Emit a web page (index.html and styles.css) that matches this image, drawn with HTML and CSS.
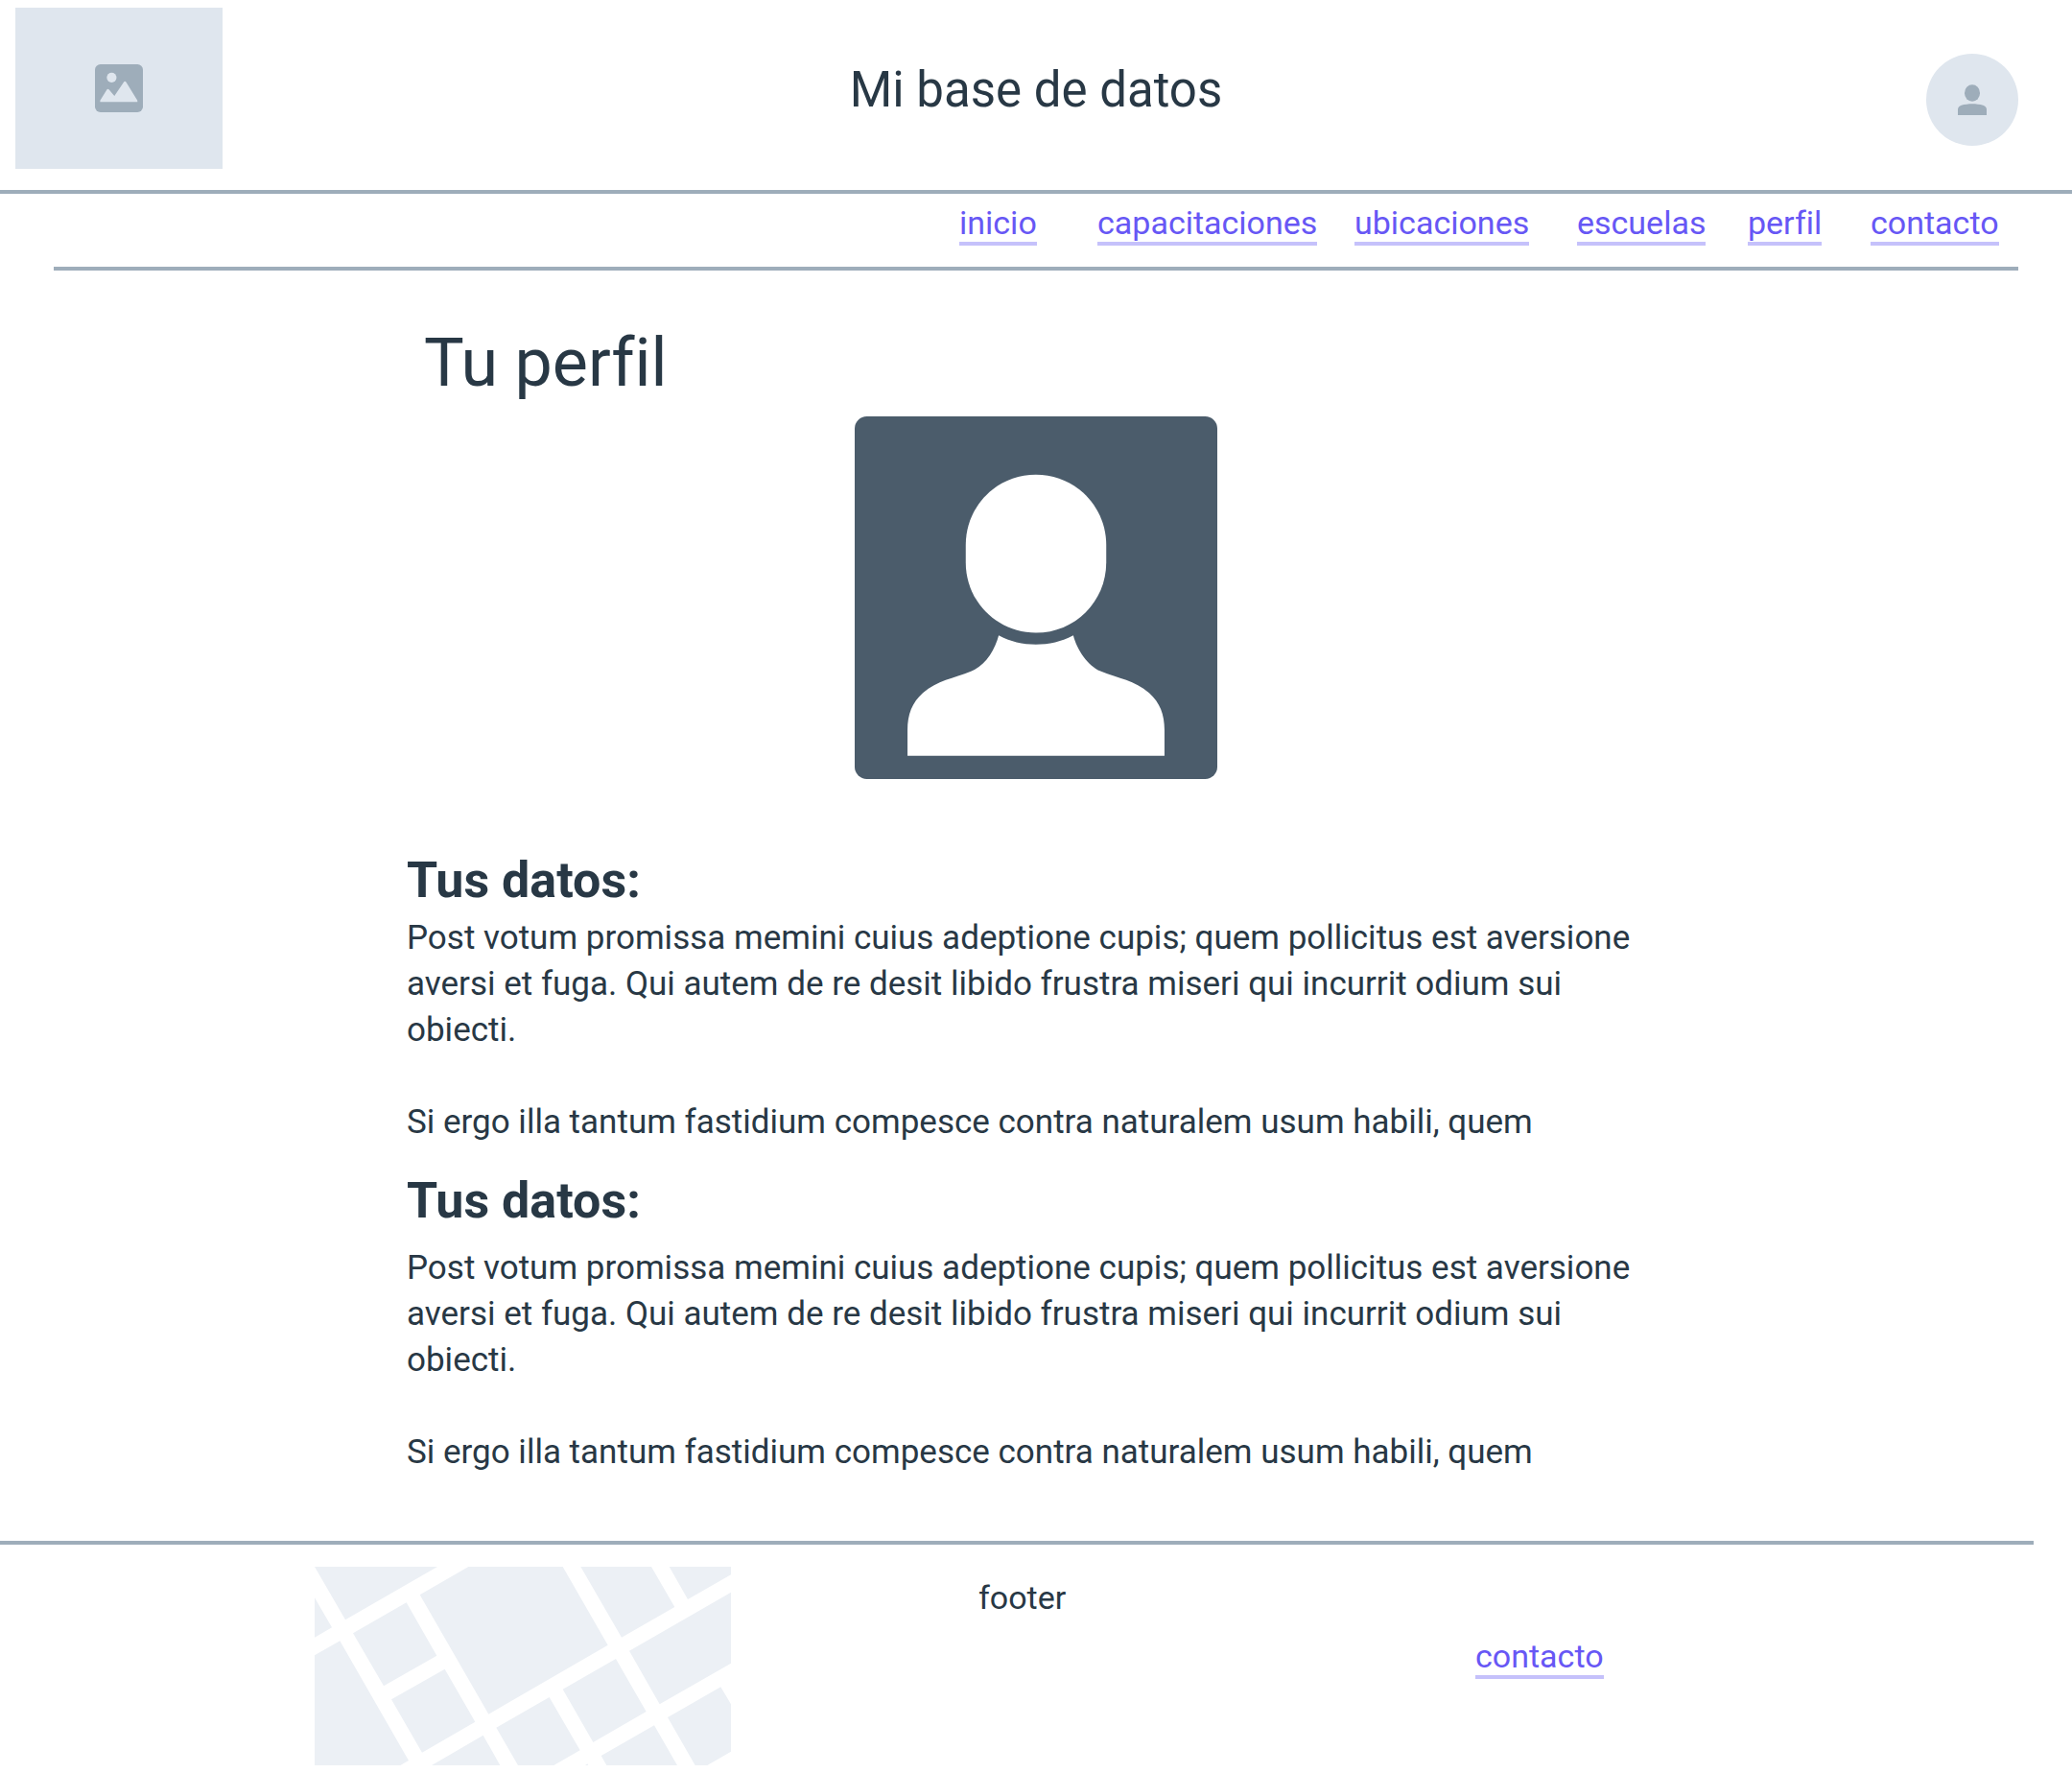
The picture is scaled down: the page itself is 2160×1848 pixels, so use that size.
FILE: index.html
```html
<!DOCTYPE html>
<html lang="es">
<head>
<meta charset="utf-8">
<meta name="viewport" content="width=device-width, initial-scale=1">
<title>Mi base de datos</title>
<link rel="stylesheet" href="styles.css">
</head>
<body>
<header class="header">
  <div class="logo">
    <svg class="logo-icon" viewBox="298 202 148 148" aria-hidden="true">
      <rect class="icon-fill" x="298" y="202" width="148" height="148" rx="17"/>
      <circle class="icon-cut" cx="349.500" cy="243" r="15"/>
      <path class="icon-cut" d="M314 318V314L335 280Q338 276 341 280L358 300L387 257Q390 252 394 257L429 314V318Z"/>
    </svg>
  </div>
  <p class="site-title">Mi base de datos</p>
  <svg class="avatar" viewBox="84 78 288 288" aria-hidden="true">
    <circle class="icon-cut" cx="228" cy="222" r="144"/>
    <rect class="icon-fill" x="204" y="175" width="48" height="52" rx="24" ry="25"/>
    <path class="icon-fill" d="M183 270V252C183 246 187 242 194 239C214 233 242 233 262 239C269 242 273 246 273 252V270Z"/>
  </svg>
</header>
<nav class="nav">
  <ul class="nav-list">
    <li><a class="link" href="#inicio">inicio</a></li>
    <li><a class="link" href="#capacitaciones">capacitaciones</a></li>
    <li><a class="link" href="#ubicaciones">ubicaciones</a></li>
    <li><a class="link" href="#escuelas">escuelas</a></li>
    <li><a class="link" href="#perfil">perfil</a></li>
    <li><a class="link" href="#contacto">contacto</a></li>
  </ul>
</nav>
<main class="main" id="perfil">
  <h1 class="page-title">Tu perfil</h1>
  <svg class="portrait" viewBox="66 72 1133 1133" aria-hidden="true">
    <rect class="portrait-back" x="66" y="72" width="1133" height="1133" rx="38"/>
    <path class="portrait-figure" d="M632 254C754 254 852 352 852 474V528C852 650 754 748 632 748C510 748 413 650 413 528V474C413 352 510 254 632 254Z"/>
    <path class="portrait-figure" d="M516 756C586 794 678 794 749 756C761 802 794 850 834 868C892 892 940 896 986 936C1020 966 1034 1004 1034 1052V1132H231V1052C231 1004 245 966 279 936C325 896 373 892 431 868C474 850 504 802 516 756Z"/>
  </svg>
  <section class="block">
    <h2 class="block-title">Tus datos:</h2>
    <p class="text">Post votum promissa memini cuius adeptione cupis; quem pollicitus est aversione aversi et fuga. Qui autem de re desit libido frustra miseri qui incurrit odium sui obiecti.</p>
    <p class="text">Si ergo illa tantum fastidium compesce contra naturalem usum habili, quem</p>
  </section>
  <section class="block block-spaced">
    <h2 class="block-title">Tus datos:</h2>
    <p class="text">Post votum promissa memini cuius adeptione cupis; quem pollicitus est aversione aversi et fuga. Qui autem de re desit libido frustra miseri qui incurrit odium sui obiecti.</p>
    <p class="text">Si ergo illa tantum fastidium compesce contra naturalem usum habili, quem</p>
  </section>
</main>
<footer class="footer" id="contacto">
  <svg class="map" viewBox="54 129 1302 621" aria-hidden="true">
    <path d="M54 129H438L150 295ZM54 226L108 319L54 350ZM54 406L133 361L348 735L322 750H54ZM174 337L341 241L436 407L270 502ZM294 544L461 449L556 614L390 710ZM383 217L535 129H830L971 374L598 590ZM886 129H1107L1180 255L1014 350ZM1163 129H1356V154L1221 231ZM1038 392L1356 209V431L1133 559ZM830 512L996 417L1091 582L925 678ZM622 632L788 537L884 703L802 750H690ZM420 750L581 656L634 750ZM950 720L1116 625L1188 750H967ZM1158 600L1324 505L1356 559V707L1282 750H1244ZM900 750L907 745L910 750Z"/>
  </svg>
  <p class="footer-text">footer</p>
  <p class="footer-link"><a class="link" href="#contacto">contacto</a></p>
</footer>
</body>
</html>
```
FILE: styles.css
```css
:root {
  --ink: #283845;
  --line: #9eadba;
  --soft: #dfe6ee;
  --accent: #6757f5;
}

* {
  box-sizing: border-box;
}

body {
  margin: 0;
  background: #fff;
  color: var(--ink);
  font: 34px/48px Roboto, "Liberation Sans", sans-serif;
  font-variant-ligatures: none;
}

h1, h2, p, ul {
  margin: 0;
  padding: 0;
}

svg {
  display: block;
}

.icon-fill {
  fill: var(--line);
}

.icon-cut {
  fill: var(--soft);
}

.header {
  display: grid;
  grid-template-columns: 1fr auto 1fr;
  align-items: center;
  padding: 8px 16px 22px;
  border-bottom: 4px solid var(--line);
}

.logo {
  display: flex;
  align-items: center;
  justify-content: center;
  width: 216px;
  height: 168px;
  background: var(--soft);
}

.logo-icon {
  width: 50px;
  height: 50px;
}

.site-title {
  padding-top: 4px;
  font-size: 51px;
  line-height: 56px;
}

.avatar {
  width: 96px;
  height: 96px;
  align-self: end;
  justify-self: end;
  margin: 0 40px 24px 0;
}

.nav {
  margin: 0 56px;
  padding: 12px 22px 22px;
  border-bottom: 4px solid var(--line);
}

.nav-list {
  display: grid;
  grid-template-columns: 144px 268px 232px 178px 128px 132px;
  justify-content: end;
  list-style: none;
}

.link {
  display: block;
  width: max-content;
  padding-bottom: 2px;
  border-bottom: 4px solid #c5c1fb;
  color: var(--accent);
  line-height: 36px;
  text-decoration: none;
}

.main {
  max-width: 1312px;
  margin: 0 auto;
  padding: 60px 0 68px;
}

.page-title {
  padding-left: 18px;
  font-size: 70px;
  font-weight: 400;
  line-height: 72px;
}

.portrait {
  width: 378px;
  height: 378px;
  margin: 20px auto 78px;
}

.portrait-back {
  fill: #4b5c6b;
}

.portrait-figure {
  fill: #fff;
}

.block-title {
  margin-bottom: 8px;
  font-size: 52px;
  font-weight: 700;
  line-height: 56px;
}

.text {
  font-size: 35px;
}

.text + .text {
  margin-top: 48px;
}

.block-spaced {
  margin-top: 30px;
}

.block-spaced .block-title {
  margin-bottom: 18px;
}

.footer {
  display: grid;
  grid-template-columns: 692fr 518fr 582fr;
  align-items: start;
  margin-right: 40px;
  padding: 23px 0 8px 328px;
  border-top: 4px solid var(--line);
}

.map {
  width: 434px;
  height: 207px;
  fill: #ecf0f5;
}

.footer-text {
  margin-top: 8px;
}

.footer-link {
  margin-top: 75px;
}
```
